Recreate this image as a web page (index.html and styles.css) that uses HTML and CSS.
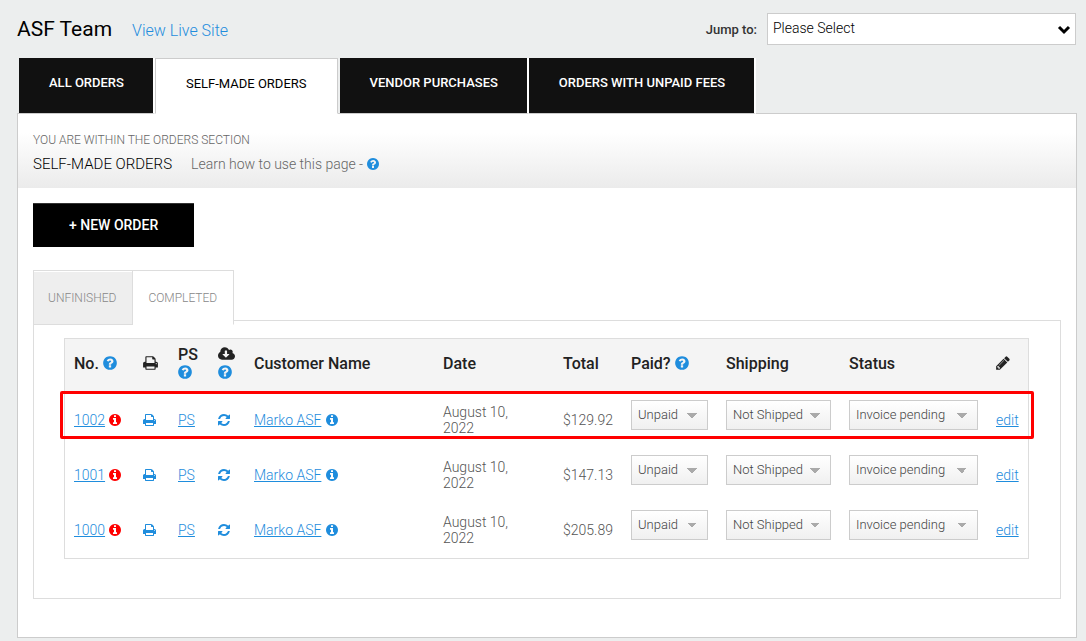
FILE: index.html
```html
<!DOCTYPE html>
<html lang="en">
<head>
    <meta charset="UTF-8">
    <meta name="viewport" content="width=device-width, initial-scale=1.0">
    <title>Self-Made Orders</title>
    <link rel="stylesheet" href="styles.css">
</head>
<body>
    <!-- Icon sprite -->
    <svg class="sprite" aria-hidden="true">
        <symbol id="icon-question" viewBox="128 0 1536 1792"><path d="M1024 1376v-192q0-14-9-23t-23-9h-192q-14 0-23 9t-9 23v192q0 14 9 23t23 9h192q14 0 23-9t9-23zm256-672q0-88-55.5-163t-138.5-116-170-41q-243 0-371 213-15 24 8 42l132 100q7 6 19 6 16 0 25-12 53-68 86-92 34-24 86-24 48 0 85.5 26t37.5 59q0 38-20 61t-68 45q-63 28-115.5 86.5t-52.5 125.5v36q0 14 9 23t23 9h192q14 0 23-9t9-23q0-19 21.5-49.5t54.5-49.5q32-18 49-28.5t46-35 44.5-48 28-60.5 12.5-81zm384 192q0 209-103 385.5t-279.5 279.5-385.5 103-385.5-103-279.5-279.5-103-385.5 103-385.5 279.5-279.5 385.5-103 385.5 103 279.5 279.5 103 385.5z"/></symbol>
        <symbol id="icon-info" viewBox="128 0 1536 1792"><path d="M1152 1376v-160q0-14-9-23t-23-9h-96v-512q0-14-9-23t-23-9h-320q-14 0-23 9t-9 23v160q0 14 9 23t23 9h96v320h-96q-14 0-23 9t-9 23v160q0 14 9 23t23 9h448q14 0 23-9t9-23zm-128-896v-160q0-14-9-23t-23-9h-192q-14 0-23 9t-9 23v160q0 14 9 23t23 9h192q14 0 23-9t9-23zm640 416q0 209-103 385.5t-279.5 279.5-385.5 103-385.5-103-279.5-279.5-103-385.5 103-385.5 279.5-279.5 385.5-103 385.5 103 279.5 279.5 103 385.5z"/></symbol>
        <symbol id="icon-print" viewBox="64 0 1664 1792"><path d="M448 1536h896v-256h-896v256zm0-640h896v-384h-160q-40 0-68-28t-28-68v-160h-640v640zm1152 64q0-26-19-45t-45-19-45 19-19 45 19 45 45 19 45-19 19-45zm128 0v416q0 13-9.5 22.5t-22.5 9.5h-224v160q0 40-28 68t-68 28h-960q-40 0-68-28t-28-68v-160h-224q-13 0-22.5-9.5t-9.5-22.5v-416q0-79 56.5-135.5t135.5-56.5h64v-544q0-40 28-68t68-28h672q40 0 88 20t76 48l152 152q28 28 48 76t20 88v256h64q79 0 135.5 56.5t56.5 135.5z"/></symbol>
        <symbol id="icon-refresh" viewBox="128 0 1536 1792"><path d="M1639 1056q0 5-1 7-64 268-268 434.5t-478 166.5q-146 0-282.5-55t-243.5-157l-129 129q-19 19-45 19t-45-19-19-45v-448q0-26 19-45t45-19h448q26 0 45 19t19 45-19 45l-137 137q71 66 161 102t187 36q134 0 250-65t186-179q11-17 53-117 8-23 30-23h192q13 0 22.5 9.5t9.5 22.5zm25-800v448q0 26-19 45t-45 19h-448q-26 0-45-19t-19-45 19-45l138-138q-148-137-349-137-134 0-250 65t-186 179q-11 17-53 117-8 23-30 23h-199q-13 0-22.5-9.5t-9.5-22.5v-7q65-268 270-434.5t480-166.5q146 0 284 55.5t245 156.5l130-129q19-19 45-19t45 19 19 45z"/></symbol>
        <symbol id="icon-download" viewBox="-64 0 1920 1792"><path d="M1216 928q0-14-9-23t-23-9h-224v-352q0-13-9.5-22.5t-22.5-9.5h-192q-13 0-22.5 9.5t-9.5 22.5v352h-224q-13 0-22.5 9.5t-9.5 22.5q0 14 9 23l352 352q9 9 23 9t23-9l351-351q10-12 10-24zm640 224q0 159-112.5 271.5t-271.5 112.5h-1088q-185 0-316.5-131.5t-131.5-316.5q0-130 70-240t188-165q-2-30-2-43 0-212 150-362t362-150q156 0 285.5 87t188.5 231q71-62 166-62 106 0 181 75t75 181q0 76-41 138 130 31 213.5 135.5t83.5 238.5z"/></symbol>
        <symbol id="icon-pencil" viewBox="128 0 1536 1792"><path d="M491 1536l91-91-235-235-91 91v107h128v128h107zm523-928q0-22-22-22-10 0-17 7l-542 542q-7 7-7 17 0 22 22 22 10 0 17-7l542-542q7-7 7-17zm-54-192l416 416-832 832h-416v-416zm683 96q0 53-37 90l-166 166-416-416 166-165q36-38 90-38 53 0 91 38l235 234q37 39 37 91z"/></symbol>
    </svg>

    <header class="topbar">
        <h1>ASF Team</h1>
        <a href="#" class="live-link">View Live Site</a>
        <label for="jumpTo">Jump to:</label>
        <div class="jump">
            <select id="jumpTo">
                <option>Please Select</option>
            </select>
            <svg class="jump-arrow" viewBox="0 0 14 10" aria-hidden="true"><path d="M2 2l5 5 5-5"/></svg>
        </div>
    </header>

    <nav class="tabs">
        <a href="#">ALL ORDERS</a>
        <a href="#" class="active">SELF-MADE ORDERS</a>
        <a href="#">VENDOR PURCHASES</a>
        <a href="#">ORDERS WITH UNPAID FEES</a>
    </nav>

    <main class="panel">
        <div class="page-head">
            <p class="section-name">YOU ARE WITHIN THE ORDERS SECTION</p>
            <div class="page-title">
                <h2>SELF-MADE ORDERS</h2>
                <p>Learn how to use this page - <a href="#" aria-label="Help"><svg class="icon"><use href="#icon-question"/></svg></a></p>
            </div>
        </div>

        <div class="page-body">
            <button type="button" class="new-order">+ NEW ORDER</button>

            <nav class="subtabs">
                <a href="#">UNFINISHED</a>
                <a href="#" class="active">COMPLETED</a>
            </nav>

            <section class="orders">
                <table>
                    <colgroup>
                        <col class="col-no">
                        <col class="col-print">
                        <col class="col-ps">
                        <col class="col-sync">
                        <col>
                        <col class="col-date">
                        <col class="col-total">
                        <col class="col-paid">
                        <col class="col-shipping">
                        <col class="col-status">
                        <col class="col-edit">
                    </colgroup>
                    <thead>
                        <tr>
                            <th>No. <svg class="icon help"><use href="#icon-question"/></svg></th>
                            <th><svg class="icon wide"><use href="#icon-print"/></svg></th>
                            <th>PS <svg class="icon help"><use href="#icon-question"/></svg></th>
                            <th><svg class="icon cloud"><use href="#icon-download"/></svg> <svg class="icon help"><use href="#icon-question"/></svg></th>
                            <th>Customer Name</th>
                            <th>Date</th>
                            <th>Total</th>
                            <th>Paid? <svg class="icon help"><use href="#icon-question"/></svg></th>
                            <th>Shipping</th>
                            <th>Status</th>
                            <th><svg class="icon"><use href="#icon-pencil"/></svg></th>
                        </tr>
                    </thead>
                    <tbody>
                        <tr class="highlighted">
                            <td><a href="#">1002</a> <svg class="icon alert"><use href="#icon-info"/></svg></td>
                            <td><a href="#" aria-label="Print"><svg class="icon wide"><use href="#icon-print"/></svg></a></td>
                            <td><a href="#">PS</a></td>
                            <td><a href="#" aria-label="Refresh"><svg class="icon"><use href="#icon-refresh"/></svg></a></td>
                            <td><a href="#">Marko ASF</a> <svg class="icon help"><use href="#icon-info"/></svg></td>
                            <td class="date">August 10, 2022</td>
                            <td>$129.92</td>
                            <td class="control"><select class="paid" aria-label="Paid"><option>Unpaid</option></select></td>
                            <td class="control"><select class="shipping" aria-label="Shipping"><option>Not Shipped</option></select></td>
                            <td class="control"><select class="status" aria-label="Status"><option>Invoice pending</option></select></td>
                            <td><a href="#">edit</a></td>
                        </tr>
                        <tr>
                            <td><a href="#">1001</a> <svg class="icon alert"><use href="#icon-info"/></svg></td>
                            <td><a href="#" aria-label="Print"><svg class="icon wide"><use href="#icon-print"/></svg></a></td>
                            <td><a href="#">PS</a></td>
                            <td><a href="#" aria-label="Refresh"><svg class="icon"><use href="#icon-refresh"/></svg></a></td>
                            <td><a href="#">Marko ASF</a> <svg class="icon help"><use href="#icon-info"/></svg></td>
                            <td class="date">August 10, 2022</td>
                            <td>$147.13</td>
                            <td class="control"><select class="paid" aria-label="Paid"><option>Unpaid</option></select></td>
                            <td class="control"><select class="shipping" aria-label="Shipping"><option>Not Shipped</option></select></td>
                            <td class="control"><select class="status" aria-label="Status"><option>Invoice pending</option></select></td>
                            <td><a href="#">edit</a></td>
                        </tr>
                        <tr>
                            <td><a href="#">1000</a> <svg class="icon alert"><use href="#icon-info"/></svg></td>
                            <td><a href="#" aria-label="Print"><svg class="icon wide"><use href="#icon-print"/></svg></a></td>
                            <td><a href="#">PS</a></td>
                            <td><a href="#" aria-label="Refresh"><svg class="icon"><use href="#icon-refresh"/></svg></a></td>
                            <td><a href="#">Marko ASF</a> <svg class="icon help"><use href="#icon-info"/></svg></td>
                            <td class="date">August 10, 2022</td>
                            <td>$205.89</td>
                            <td class="control"><select class="paid" aria-label="Paid"><option>Unpaid</option></select></td>
                            <td class="control"><select class="shipping" aria-label="Shipping"><option>Not Shipped</option></select></td>
                            <td class="control"><select class="status" aria-label="Status"><option>Invoice pending</option></select></td>
                            <td><a href="#">edit</a></td>
                        </tr>
                    </tbody>
                </table>
            </section>
        </div>
    </main>
</body>
</html>
```
FILE: styles.css
```css
*,
*::after {
    box-sizing: border-box;
}

body {
    margin: 0;
    padding: 13px 9px 3px 17px;
    background-color: #eceeee;
    color: #555;
    font-family: Roboto, sans-serif;
    font-size: 14px;
    font-weight: 300;
}

h1, h2, p {
    margin: 0;
    font-weight: 300;
}

a {
    color: #1f8ddd;
}

.sprite {
    display: none;
}

.icon {
    width: 12px;
    height: 14px;
    fill: currentColor;
    vertical-align: -2px;
}

.icon.wide {
    width: 13px;
}

.icon.help {
    color: #1f8ddd;
}

.icon.alert {
    color: #f00;
}

/* Top bar */
.topbar {
    display: flex;
    align-items: center;
    height: 32px;
    margin-bottom: 13px;
    padding-right: 1px;
}

.topbar h1 {
    color: #000;
    font-size: 21px;
    font-weight: 400;
}

.live-link {
    margin-left: 20px;
    padding-top: 2px;
    font-size: 16px;
    text-decoration: none;
}

.topbar label {
    margin-left: auto;
    margin-right: 10px;
    color: #333;
    font-size: 13px;
    font-weight: 500;
}

.jump {
    position: relative;
    width: 309px;
}

.jump select {
    width: 100%;
    height: 32px;
    padding: 0 30px 2px 5px;
    border: 1px solid #ccc;
    border-radius: 0;
    background-color: #fff;
    color: #000;
    font: inherit;
    appearance: none;
}

.jump-arrow {
    position: absolute;
    top: 12px;
    right: 5px;
    width: 14px;
    height: 10px;
    fill: none;
    stroke: #000;
    stroke-width: 3;
    pointer-events: none;
}

/* Main tabs */
.tabs {
    display: flex;
    position: relative;
    margin: 0 0 -1px 2px;
}

.tabs a {
    height: 56px;
    padding: 0 29px 0 30px;
    border-right: 2px solid #fff;
    border-bottom: 1px solid #ccc;
    background-color: #111;
    background-clip: padding-box;
    color: #fff;
    font-size: 13px;
    font-weight: 500;
    line-height: 50px;
    text-decoration: none;
}

.tabs a.active {
    margin-right: 2px;
    padding: 0 30px;
    border: 1px solid #ccc;
    border-bottom-color: #fff;
    background-color: #fff;
    color: #000;
    font-weight: 400;
}

/* Panel */
.panel {
    border: 1px solid #ccc;
    background-color: #fff;
}

.page-head {
    height: 74px;
    padding: 18px 15px 0;
    background: linear-gradient(#fff 25%, #ebebeb);
}

.section-name {
    color: #666;
    font-size: 12px;
    line-height: 16px;
}

.page-title {
    display: flex;
    gap: 19px;
    margin-top: 6px;
    color: #666;
    line-height: 20px;
}

.page-title h2 {
    color: #000;
    font-size: 15px;
}

.page-body {
    padding: 15px 15px 38px;
}

.new-order {
    display: block;
    height: 44px;
    padding: 0 36px 2px;
    border: 0;
    border-top: 1px solid #333;
    background-color: #000;
    color: #fff;
    font: 500 14px Roboto, sans-serif;
    cursor: pointer;
}

/* Sub tabs */
.subtabs {
    display: flex;
    position: relative;
    margin: 23px 0 -5px;
}

.subtabs a {
    height: 55px;
    padding: 0 16px 0 15px;
    border: 1px solid #ddd;
    border-left: 0;
    background-color: #eee;
    box-shadow: inset 0 1px #fff;
    color: #888;
    font-size: 12px;
    line-height: 54px;
    text-decoration: none;
}

.subtabs a:first-child {
    padding-left: 14px;
    border-left: 1px solid #ddd;
}

.subtabs a.active {
    border-bottom-color: #fff;
    background-color: #fff;
}

/* Orders table */
.orders {
    padding: 17px 31px 39px 30px;
    border: 1px solid #ddd;
}

table {
    width: 100%;
    border: 1px solid #ddd;
    border-spacing: 0;
    table-layout: fixed;
}

.col-no { width: 69px; }
.col-print { width: 35px; }
.col-ps { width: 40px; }
.col-sync { width: 36px; }
.col-date { width: 120px; }
.col-total { width: 68px; }
.col-paid { width: 95px; }
.col-shipping { width: 123px; }
.col-status { width: 147px; }
.col-edit { width: 41px; }

th {
    height: 53px;
    padding: 0 0 4px 9px;
    background-color: #f4f4f4;
    color: #222;
    font-size: 16px;
    font-weight: 500;
    line-height: 18px;
    text-align: left;
}

th .icon {
    width: 14px;
    height: 16px;
}

th .icon.wide {
    width: 15px;
}

th .icon.cloud {
    width: 17px;
}

td {
    height: 55px;
    padding: 0 0 0 9px;
    line-height: 16px;
}

tr:last-child td {
    height: 56px;
}

td a + .icon {
    margin-left: 1px;
}

td.date {
    padding-right: 30px;
}

td.control {
    padding-top: 8px;
    vertical-align: top;
}

td select {
    display: block;
    height: 30px;
    padding: 0 20px 2px 6px;
    border: 1px solid #ccc;
    border-radius: 0;
    /* drop-down arrow over the button shading */
    background:
        conic-gradient(from -45deg at 50% 100%, #aaa 90deg, transparent 0) right 10px center / 10px 5px no-repeat,
        linear-gradient(#fff, #f0f0f0);
    /* the wedge opens upwards, so the arrow points down */
    color: #444;
    font: 300 13px Roboto, sans-serif;
    appearance: none;
}

td .paid { width: 77px; }
td .shipping { width: 105px; }
td .status { width: 129px; }

.highlighted {
    position: relative;
}

.highlighted td:first-child::after {
    content: "";
    position: absolute;
    top: -1px;
    left: -5px;
    right: -6px;
    height: 48px;
    border: 3px solid #f00;
    border-radius: 2px;
    pointer-events: none;
}
```
